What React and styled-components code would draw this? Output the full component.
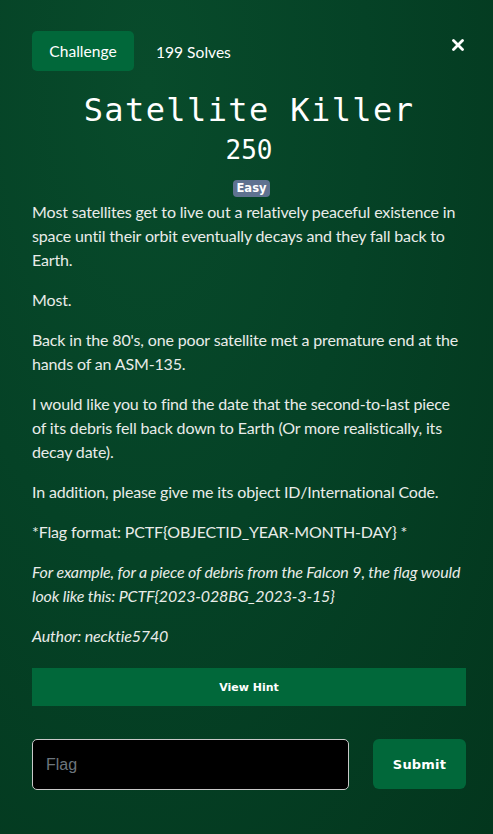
import React from "react";
import styled, { createGlobalStyle } from "styled-components";

const Global = createGlobalStyle`
  html, body { margin: 0; padding: 0; background: #03391f; }
  body { font-family: Lato, "Open Sans", sans-serif; }
  * { box-sizing: border-box; }
`;

const Modal = styled.div`
  width: 493px;
  height: 834px;
  background: radial-gradient(ellipse at 30% 10%, #084b2b 0%, #054226 45%, #03361d 100%);
  padding: 31px 27px 0 32px;
  color: #e9ece9;
  overflow: hidden;
`;

const Header = styled.div`
  display: flex;
  align-items: center;
  height: 40px;
`;

const Tab = styled.div`
  background: #01683a;
  color: #ffffff;
  border-radius: 5px;
  height: 40px;
  width: 102px;
  display: flex;
  align-items: center;
  justify-content: center;
  font-size: 15.6px;
  font-family: Lato, sans-serif;
`;

const Solves = styled.div`
  margin-left: 22px;
  font-size: 15.6px;
  color: #ffffff;
  padding-top: 2px;
`;

const Close = styled.button`
  margin-left: auto;
  margin-right: 1px;
  margin-top: -13px;
  background: none;
  border: none;
  padding: 0;
  width: 14px;
  height: 14px;
  display: flex;
  align-items: center;
  justify-content: center;
  cursor: pointer;
`;

const Title = styled.h1`
  margin: 20px 0 0;
  text-align: center;
  font-family: "DejaVu Sans Mono", monospace;
  font-weight: 400;
  font-size: 32px;
  letter-spacing: 1.4px;
  line-height: 38px;
  color: #ffffff;
`;

const Points = styled.h2`
  margin: 5px 0 0;
  text-align: center;
  font-family: "DejaVu Sans Mono", monospace;
  font-weight: 400;
  font-size: 26px;
  line-height: 32px;
  color: #ffffff;
`;

const BadgeRow = styled.div`
  display: flex;
  justify-content: center;
  margin-top: 14px;
  margin-right: -5px;
`;

const Badge = styled.span`
  background: #5f7290;
  color: #ffffff;
  font-family: "DejaVu Sans", sans-serif;
  font-weight: 700;
  font-size: 11.5px;
  line-height: 17px;
  height: 17px;
  padding: 0 4px;
  border-radius: 4px;
`;

const Description = styled.div`
  margin-top: 3px;
  font-size: 16px;
  line-height: 24px;
  letter-spacing: -0.15px;
`;

const Para = styled.p`
  margin: 0 0 16px;
  font-style: ${(p) => (p.$italic ? "italic" : "normal")};
`;

const HintButton = styled.button`
  display: block;
  width: 100%;
  height: 38px;
  margin-top: 20px;
  border: none;
  border-radius: 0;
  background: #01683a;
  color: #ffffff;
  font-family: "DejaVu Sans", sans-serif;
  font-weight: 700;
  font-size: 11px;
`;

const SubmitRow = styled.div`
  display: flex;
  gap: 24px;
  margin-top: 33px;
`;

const FlagInput = styled.input`
  width: 317px;
  height: 51px;
  background: #000000;
  border: 1px solid #c9c9c9;
  border-radius: 5px;
  padding: 0 13px;
  color: #ffffff;
  font-family: "Liberation Sans", Arial, sans-serif;
  font-size: 16px;
  outline: none;
  &::placeholder { color: #6c757d; }
`;

const Submit = styled.button`
  width: 93px;
  height: 50px;
  border: none;
  border-radius: 6px;
  background: #01683a;
  color: #ffffff;
  font-family: "DejaVu Sans", sans-serif;
  font-weight: 700;
  font-size: 13px;
  letter-spacing: 0.2px;
`;

export default function App() {
  return (
    <>
      <Global />
      <Modal>
        <Header>
          <Tab>Challenge</Tab>
          <Solves>199 Solves</Solves>
          <Close aria-label="Close">
            <svg width="12" height="12" viewBox="0 0 12 12">
              <path d="M1.5 1.5 L10.5 10.5 M10.5 1.5 L1.5 10.5" stroke="#fff" strokeWidth="2.8" strokeLinecap="round" />
            </svg>
          </Close>
        </Header>
        <Title>Satellite Killer</Title>
        <Points>250</Points>
        <BadgeRow>
          <Badge>Easy</Badge>
        </BadgeRow>
        <Description>
          <Para>
            Most satellites get to live out a relatively peaceful existence in space until their orbit eventually decays and they fall back to Earth.
          </Para>
          <Para>Most.</Para>
          <Para>Back in the 80's, one poor satellite met a premature end at the hands of an ASM-135.</Para>
          <Para>
            I would like you to find the date that the second-to-last piece of its debris fell back down to Earth (Or more realistically, its decay date).
          </Para>
          <Para>In addition, please give me its object ID/International Code.</Para>
          <Para>*Flag format: PCTF{"{"}OBJECTID_YEAR-MONTH-DAY{"}"} *</Para>
          <Para $italic>
            For example, for a piece of debris from the Falcon 9, the flag would look like this: PCTF{"{"}2023-028BG_2023-3-15{"}"}
          </Para>
          <Para $italic style={{ marginBottom: 0 }}>Author: necktie5740</Para>
        </Description>
        <HintButton>View Hint</HintButton>
        <SubmitRow>
          <FlagInput placeholder="Flag" />
          <Submit>Submit</Submit>
        </SubmitRow>
      </Modal>
    </>
  );
}
